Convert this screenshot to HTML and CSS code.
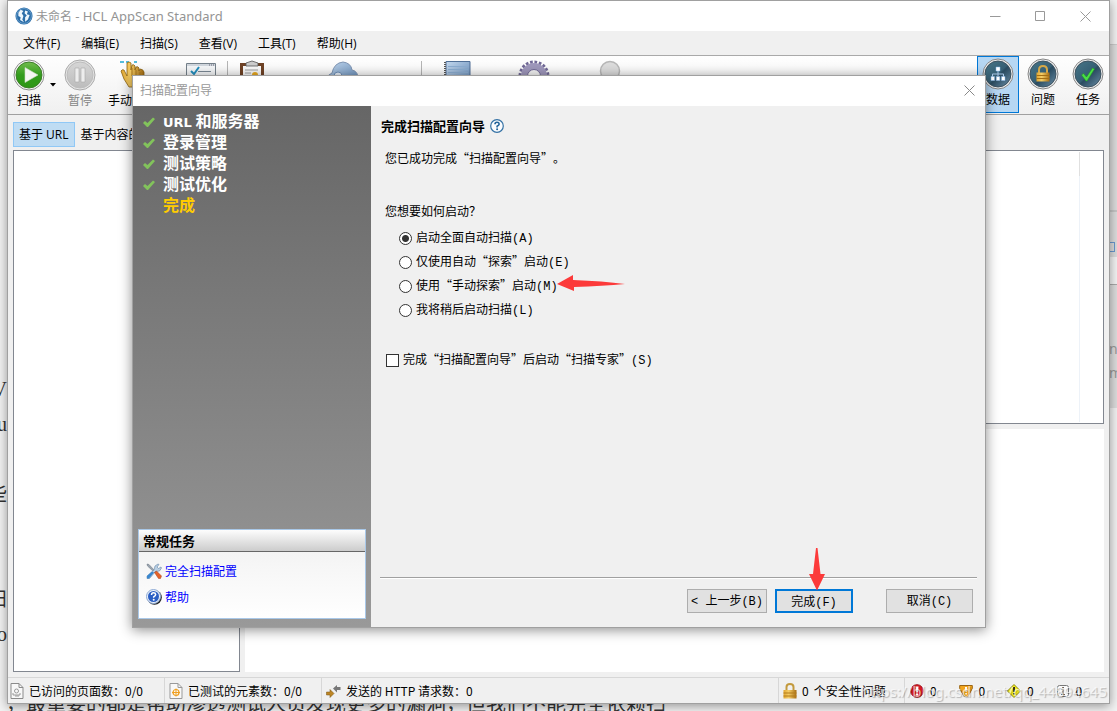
FILE: index.html
```html
<!DOCTYPE html>
<html lang="zh-CN">
<head>
<meta charset="utf-8">
<title>未命名 - HCL AppScan Standard</title>
<link rel="stylesheet" href="styles.css">
</head>
<body>
<div class="backdrop">
  <div class="article">
    <p>V</p><p>u</p><p></p><p>些</p><p>。</p><p></p><p>扫</p><p>o</p><p>，</p>
  </div>
  <p class="last-line">，最重要的都是帮助渗透测试人员发现更多的漏洞，但我们不能完全依赖扫</p>
  <div class="edge">
    <i class="edge-tab"></i><i class="edge-bar"></i><i class="edge-box"></i><i class="edge-strip"></i>
    <span>n</span><span>m</span>
  </div>
</div>

<div class="window">
  <header class="titlebar">
    <svg class="app-icon" width="18" height="18" viewBox="0 0 16 16"><circle cx="8" cy="8" r="7.6" fill="#2b6da8"/><circle cx="8" cy="8" r="6.600" fill="none" stroke="#7fb0d8" stroke-width=".6"/><path d="M3 5l2-2.500 2.500 1L6 5.500 7.500 8 6.500 11 8 13.500 4.500 11.500 5 9 3 8zM9 3l2.500 1L10.500 6.500 13 7l-1.500 4L9 13V9l1.500-1.500L8.500 5.500z" fill="#eef6fc"/></svg>
    <h1>未命名 <span>- HCL AppScan Standard</span></h1>
    <div class="controls">
      <button aria-label="最小化"><svg width="11" height="11"><path d="M0 5.500h10.500" stroke="#999"/></svg></button>
      <button aria-label="最大化"><svg width="11" height="11"><path d="M.5.500h9v9h-9z" fill="none" stroke="#999"/></svg></button>
      <button aria-label="关闭"><svg width="11" height="11"><path d="M.5.500l10 10M10.500.500l-10 10" stroke="#999"/></svg></button>
    </div>
  </header>

  <nav class="menu">
    <button>文件(F)</button><button>编辑(E)</button><button>扫描(S)</button><button>查看(V)</button><button>工具(T)</button><button>帮助(H)</button>
  </nav>

  <div class="toolbar">
    <svg width="0" height="0" class="defs"><defs>
      <linearGradient id="green" x1="0" y1="0" x2="0" y2="1"><stop offset="0" stop-color="#72bd4e"/><stop offset=".5" stop-color="#329c1c"/><stop offset="1" stop-color="#2d9715"/></linearGradient>
      <linearGradient id="grey" x1="0" y1="0" x2="0" y2="1"><stop offset="0" stop-color="#d6d6d6"/><stop offset="1" stop-color="#bcbcbc"/></linearGradient>
      <linearGradient id="teal" x1="0" y1="0" x2="1" y2="1"><stop offset="0" stop-color="#477688"/><stop offset=".5" stop-color="#365f74"/><stop offset=".55" stop-color="#2a4b60"/><stop offset="1" stop-color="#6b8fa8"/></linearGradient>
      <linearGradient id="gold" x1="0" y1="0" x2="1" y2="0"><stop offset="0" stop-color="#e0a631"/><stop offset=".4" stop-color="#f5cd66"/><stop offset="1" stop-color="#a86e13"/></linearGradient>
      <linearGradient id="blue" x1="0" y1="0" x2="1" y2="1"><stop offset="0" stop-color="#c3d8ee"/><stop offset="1" stop-color="#5f87b5"/></linearGradient>
    </defs></svg>
    <button class="tool scan"><svg width="32" height="32" viewBox="0 0 32 32"><circle cx="16" cy="16" r="15" fill="#f7f7f7" stroke="#8c8c8c"/><circle cx="16" cy="16" r="13" fill="url(#green)" stroke="#3c7f28"/><path d="M12 8.500v15L25 16z" fill="#f4f6f2" stroke="#ccdcc6" stroke-width=".6"/></svg><span>扫描</span></button>
    <button class="arrow" aria-label="扫描选项"><svg width="6" height="4"><path d="M0 0h6L3 3.500z"/></svg></button>
    <button class="tool pause" disabled><svg width="32" height="32" viewBox="0 0 32 32"><circle cx="16" cy="16" r="15" fill="#e5e5e5" stroke="#aaa"/><circle cx="16" cy="16" r="13" fill="url(#grey)" stroke="#bdbdbd"/><path d="M11 9h4v14h-4zM17 9h4v14h-4z" fill="#ededed" stroke="#aaa" stroke-width=".6"/></svg><span>暂停</span></button>
    <button class="tool hand"><svg width="32" height="32" viewBox="0 0 32 32"><path d="M4 3h4m2 0h3m5 0h3" stroke="#1fa6d0" stroke-width="1.500"/><path d="M11 4q2-2 4 0v7l1-5q2-1 3 1v4l1-3q2-1 3 1v3l1-2q3 0 4 3v11l-3 4H13l-5-8-3-8q1-2 3-1l3 6z" fill="url(#gold)" stroke="#8a6313" stroke-width=".8"/><path d="M16 9v8m4-6v7m4-5v6" stroke="#a8781c" fill="none"/></svg><span>手动探索</span></button>
    <button class="tool list" aria-label="配置"><svg width="32" height="32" viewBox="0 0 32 32"><path d="M1.500 4.500h29v26h-29z" fill="#f5f7f9" stroke="#74808a"/><path d="M2 6h28" stroke="#c5cdd5" stroke-width="1.500"/><path d="M24 6h5" stroke="#667" stroke-dasharray="1 1"/><path d="M6 12l3 3 5-7" stroke="#238fbf" stroke-width="2" fill="none"/><path d="M13 12.500h13" stroke="#7c8a96"/></svg></button>
    <i class="sep"></i>
    <button class="tool report" aria-label="报告"><svg width="32" height="32" viewBox="0 0 32 32"><rect x="4" y="4" width="24" height="28" fill="#704326"/><path d="M7 7h18v24H7z" fill="#fafafa"/><path d="M10 7V4l3-1q3-2 6 0l3 1v3z" fill="#ccc" stroke="#555" stroke-width=".8"/><path d="M9 11h13M9 14h6" stroke="#a0a0a0"/><circle cx="19" cy="16" r="3" fill="#eaaa22"/></svg></button>
    <button class="tool cloud" aria-label="云"><svg width="32" height="32" viewBox="0 0 32 32"><path d="M1 24q-3-6 5-10Q8 4 17 3q8 1 9 8 7 1 6 12H2z" fill="url(#blue)" stroke="#7e94b3"/><circle cx="12" cy="17" r="4" fill="#e5eef8" stroke="#6e8fb8"/></svg></button>
    <i class="sep far"></i>
    <button class="tool book" aria-label="日志"><svg width="32" height="32" viewBox="0 0 32 32"><path d="M5 2.500h24v28H5z" fill="url(#blue)" stroke="#506f96"/><path d="M7 7.500h20M7 10.500h20M7 13.500h20M7 16.500h20" stroke="#8caed2"/><path d="M4 3v28" stroke="#555" stroke-width="2" stroke-dasharray="1 1"/></svg></button>
    <button class="tool gear" aria-label="工具"><svg width="32" height="32" viewBox="0 0 32 32"><circle cx="16" cy="17" r="14" fill="none" stroke="#716996" stroke-width="3" stroke-dasharray="2.700 1.700"/><circle cx="16" cy="17" r="9.500" fill="none" stroke="#9f98bc" stroke-width="7"/><circle cx="16" cy="17" r="6.500" fill="#f4f4f4" stroke="#716996"/></svg></button>
    <button class="tool lens" aria-label="搜索"><svg width="32" height="32" viewBox="0 0 32 32"><circle cx="16" cy="12" r="9.500" fill="#dcdcdc" stroke="#b7b7b7" stroke-width="1.500"/></svg></button>
    <div class="views">
      <button class="tool view selected"><svg width="32" height="32" viewBox="0 0 32 32"><circle cx="16" cy="16" r="15" fill="#eee" stroke="#858585"/><circle cx="16" cy="16" r="13" fill="url(#teal)" stroke="#3d5260"/><path d="M16 13v5M10.500 19v-3h11v3" fill="none" stroke="#a9c8e8"/><path d="M14 9h4v4h-4zM9 18.500h3.500v4H9zM14.300 18.500h3.500v4h-3.500zM19.500 18.500H23v4h-3.500z" fill="#fff" stroke="#82b5e8" stroke-width=".5"/></svg><span>数据</span></button>
      <button class="tool view"><svg width="32" height="32" viewBox="0 0 32 32"><circle cx="16" cy="16" r="15" fill="#eee" stroke="#858585"/><circle cx="16" cy="16" r="13" fill="url(#teal)" stroke="#3d5260"/><path d="M12 16v-4q0-4 4-4t4 4v4" fill="none" stroke="#d5a847" stroke-width="2"/><path d="M9.500 14.500h13v9h-13z" fill="url(#gold)"/><path d="M9.500 17.500h13m-13 3h13" stroke="#a56f13"/></svg><span>问题</span></button>
      <button class="tool view"><svg width="32" height="32" viewBox="0 0 32 32"><circle cx="16" cy="16" r="15" fill="#eee" stroke="#858585"/><circle cx="16" cy="16" r="13" fill="url(#teal)" stroke="#3d5260"/><path d="M9.500 17l2-1.500 3 3.500 6-9 2 1-7.500 12h-1z" fill="#49df45" stroke="#239528" stroke-width=".6"/></svg><span>任务</span></button>
    </div>
  </div>

  <main class="workspace">
    <section class="left-pane">
      <div class="tabs"><button class="active">基于 URL</button><button>基于内容的</button></div>
      <div class="tree"></div>
    </section>
    <section class="right-pane">
      <div class="results"><i class="column-line"></i></div>
      <div class="details"></div>
    </section>
  </main>

  <footer class="status">
    <div class="cell pages"><svg width="14" height="16" viewBox="0 0 14 16"><path d="M1 .5h8l4 4v11H1z" fill="#f8f8f8" stroke="#8b8b8b"/><path d="M9 .5v4h4" fill="none" stroke="#8b8b8b"/><circle cx="6.500" cy="8" r="2" fill="none" stroke="#999"/><path d="M3 10v2h7v-2M5 13h4" fill="none" stroke="#999"/></svg>已访问的页面数：0/0</div>
    <div class="cell elements"><svg width="14" height="16" viewBox="0 0 14 16"><path d="M1 .5h8l4 4v11H1z" fill="#f8f8f8" stroke="#999"/><path d="M9 .5v4h4" fill="none" stroke="#999"/><circle cx="7" cy="9.500" r="3" fill="none" stroke="#f0a020" stroke-width="1.200"/><path d="M7 5.500v8M3 9.500h8" stroke="#f0a020"/></svg>已测试的元素数：0/0</div>
    <div class="cell requests"><svg width="15" height="14" viewBox="0 0 15 14"><path d="M14.500 3v3H11v2.500L7 4.500 11 1v2z" fill="#777"/><path d="M.5 8v3H4v2.500l4-4L4 5.500V8z" fill="#bd8524" stroke="#775210" stroke-width=".5"/></svg>发送的 HTTP 请求数：0</div>
    <div class="cell issues"><svg width="14" height="16" viewBox="0 0 14 16"><path d="M3.500 8V4q0-3 3.500-3t3.500 3v4" fill="none" stroke="#c39a3e" stroke-width="2"/><path d="M.5 7h13v8.500H.5z" fill="url(#gold)"/><path d="M.5 10h13M.5 13h13" stroke="#b27a1b"/></svg><span>0</span><span>个安全性问题</span></div>
    <div class="cell severities">
      <span><svg width="14" height="14" viewBox="0 0 14 14"><circle cx="7" cy="7" r="6.300" fill="#d71920" stroke="#a01018"/><path d="M5.500 2.500h3L8 8.500H6z" fill="#fff"/><circle cx="7" cy="10.500" r="1.200" fill="#fff"/></svg>0</span>
      <span><svg width="14" height="14" viewBox="0 0 14 14"><path d="M.7 1.500h12.600v3L9 12.500H5l-4.300-8z" fill="#f2a51d" stroke="#9b6514"/><path d="M6 3h2L7.700 8H6.300zM6.200 9h1.600v1.500H6.200z" fill="#fff"/></svg>0</span>
      <span><svg width="14" height="14" viewBox="0 0 14 14"><path d="M7 .5L13.500 7 7 13.500.5 7z" fill="#f5ee20" stroke="#8a860e"/><path d="M6 3h2l-.3 5H6.300zM6.200 9h1.600v1.500H6.200z" fill="#222"/></svg>0</span>
      <span><svg width="14" height="14" viewBox="0 0 14 14"><rect x="1.500" y="1.500" width="11" height="11" rx="2" fill="#fafafa" stroke="#777"/><path d="M5.500 5.500H7v5M5 10.500h4M6 3.500h2" fill="none" stroke="#666"/></svg>0</span>
    </div>
    <span class="watermark">https://blog.csdn.net/qq_44894645</span>
  </footer>
</div>

<div class="dialog" role="dialog" aria-labelledby="dialog-title">
  <header class="dialog-title"><h2 id="dialog-title">扫描配置向导</h2><button aria-label="关闭"><svg width="11" height="11"><path d="M.5.500l10 10M10.500.500l-10 10" stroke="#888"/></svg></button></header>
  <div class="dialog-body">
    <aside class="sidebar">
      <ol class="steps">
        <li><svg width="12" height="11" viewBox="0 0 12 11"><path d="M0 6l2-2 2.500 2L10 .5 12 2 5 10H4z" fill="#82c35b"/></svg><span><b class="latin">URL</b> 和服务器</span></li>
        <li><svg width="12" height="11" viewBox="0 0 12 11"><path d="M0 6l2-2 2.500 2L10 .5 12 2 5 10H4z" fill="#82c35b"/></svg><span>登录管理</span></li>
        <li><svg width="12" height="11" viewBox="0 0 12 11"><path d="M0 6l2-2 2.500 2L10 .5 12 2 5 10H4z" fill="#82c35b"/></svg><span>测试策略</span></li>
        <li><svg width="12" height="11" viewBox="0 0 12 11"><path d="M0 6l2-2 2.500 2L10 .5 12 2 5 10H4z" fill="#82c35b"/></svg><span>测试优化</span></li>
        <li class="current"><i></i><span>完成</span></li>
      </ol>
      <section class="tasks">
        <h3>常规任务</h3>
        <div class="task-links">
          <a href="#config"><svg width="16" height="16" viewBox="0 0 16 16"><path d="M1 1l2 .5L10 9l-1 1L1.500 3z" fill="#9aa5b0" stroke="#66717c" stroke-width=".5"/><path d="M1 13l7-6 1-4 3-2 1 .5-2 2.500 1.500 1.500L15 4l.5 1-2 3-4 .5-6 7H1z" fill="#b9cfe3" stroke="#6587a8" stroke-width=".6"/><path d="M1 13l5-4.500 2 1-5 6H1z" fill="#3987cf"/><path d="M8.500 9.500l2-1.500 5 5-1 2.500h-2z" fill="#e4632a" stroke="#a83f14" stroke-width=".5"/></svg>完全扫描配置</a>
          <a href="#help"><svg width="16" height="16" viewBox="0 0 16 16"><circle cx="8.500" cy="8.500" r="7.300" fill="#222"/><circle cx="7.500" cy="7.500" r="7" fill="#edf2fa" stroke="#8eabd6"/><circle cx="7.500" cy="7.500" r="5.500" fill="#2b5fc4"/><path d="M5.500 6q0-2.200 2-2.200t2.200 1.800q0 1.200-2 2.200v1" fill="none" stroke="#fff" stroke-width="1.500"/><circle cx="7.700" cy="10.800" r="1" fill="#fff"/></svg>帮助</a>
        </div>
      </section>
    </aside>
    <form class="content">
      <h2>完成扫描配置向导 <svg width="14" height="14" viewBox="0 0 14 14"><circle cx="7" cy="7" r="6.300" fill="#fafcfe" stroke="#3572a5" stroke-width="1.200"/><path d="M5 5.300q0-2 2-2t2.200 1.700q0 1-2.100 2.200v1.200" fill="none" stroke="#22649b" stroke-width="1.600"/><circle cx="7.100" cy="10.200" r="1" fill="#22649b"/></svg></h2>
      <p>您已成功完成“扫描配置向导”。</p>
      <fieldset>
        <legend>您想要如何启动？</legend>
        <label><input type="radio" name="start" checked><span>启动全面自动扫描<span class="key">(A)</span></span></label>
        <label><input type="radio" name="start"><span>仅使用自动“探索”启动<span class="key">(E)</span></span></label>
        <label><input type="radio" name="start"><span>使用“手动探索”启动<span class="key">(M)</span></span>
          <svg class="mark-left" width="70" height="18" viewBox="0 0 70 18"><path d="M0 9l16-9v5q30 1 52 4-22 2-51 3v4z" fill="#fc3a3a"/></svg></label>
        <label><input type="radio" name="start"><span>我将稍后启动扫描<span class="key">(L)</span></span></label>
      </fieldset>
      <label class="expert"><input type="checkbox"><span>完成“扫描配置向导”后启动“扫描专家”<span class="key">(S)</span></span></label>
      <footer class="actions">
        <button type="button" class="back"><span class="key">&lt; </span>上一步<span class="key">(B)</span></button>
        <button type="button" class="finish">完成<span class="key">(F)</span><svg class="mark-down" width="18" height="44" viewBox="0 0 18 44"><path d="M8 1h1.500l3 26H17l-8 16.500L1 27h4z" fill="#fc3a3a"/></svg></button>
        <button type="button" class="cancel">取消<span class="key">(C)</span></button>
      </footer>
    </form>
  </div>
</div>
</body>
</html>
```

FILE: styles.css
```css
* { box-sizing: border-box; margin: 0; padding: 0; }
html, body { height: 100%; overflow: hidden; }
body {
  position: relative;
  background: #f0f0f0;
  color: #000;
  font: 12px/16px "Noto Sans CJK SC", sans-serif;
  text-spacing-trim: space-all;
}
button { border: 0; background: none; font: inherit; color: inherit; }
svg { flex: none; display: block; }

/* document behind the windows */
.backdrop { position: absolute; inset: 0; overflow: hidden; background: #f3f3f3; color: #333; font-size: 20px; line-height: 35px; }
.article { position: absolute; bottom: -11px; left: 0; width: 7px; padding-bottom: 35px; overflow: hidden; font-family: "Liberation Serif", "Noto Sans CJK SC", serif; }
.article p { height: 35px; display: flex; justify-content: flex-end; }
.last-line { position: absolute; left: 6px; bottom: -9px; white-space: nowrap; }
.edge { position: absolute; right: 0; top: 44px; width: 8px; height: 364px; background: #dedede; display: flex; flex-direction: column; color: #999; font: 14px/24px "Noto Sans", sans-serif; overflow: hidden; }
.edge-tab { height: 168px; border-top: 1px solid #ccc; border-bottom: 2px solid #c8c8c8; }
.edge-bar { height: 30px; }
.edge-box { height: 10px; width: 6px; border: 1px solid #6a9ad0; }
.edge-strip { height: 28px; margin: 5px 0 52px; background: #f5f5f5; border-bottom: 1px solid #aaa; }

/* main window */
.window {
  position: absolute;
  inset: 0 7px 7px 7px;
  display: flex;
  flex-direction: column;
  background: #f0f0f0;
  border: 1px solid #a0a0a0;
  box-shadow: 0 2px 10px rgba(0,0,0,.4);
}
.titlebar { height: 30px; flex: none; display: flex; align-items: center; padding-left: 7px; background: #fff; color: #949494; }
.titlebar h1 { margin-left: 3px; font: 12px/16px "Noto Sans", "Noto Sans CJK SC", sans-serif; }
.titlebar h1 span { font-size: 13px; }
.controls { display: flex; margin-left: auto; padding-right: 1px; }
.controls button { width: 45px; height: 28px; display: grid; place-items: center; }
.menu { height: 25px; flex: none; display: flex; gap: 21px; padding: 1px 0 0 15px; border-bottom: 1px solid #a9a9a9; font-family: "Open Sans", "Noto Sans CJK SC", sans-serif; }

.toolbar { height: 59px; flex: none; display: flex; background: linear-gradient(#fefefe, #f0f0f0); border-bottom: 1px solid #a0a0a0; }
.defs { position: absolute; }
.tool { flex: none; display: flex; flex-direction: column; align-items: center; padding-top: 3px; white-space: nowrap; }
.tool span { margin-top: 1px; }
.scan { width: 42px; }
.arrow { width: 6px; display: grid; place-items: center; }
.pause { width: 48px; color: #858585; }
.hand { width: 56px; }
.list { width: 82px; }
.sep { width: 1px; height: 44px; margin-top: 5px; background: #b5b5b5; margin-left: -15px; }
.report { width: 48px; }
.cloud { width: 132px; }
.sep.far { margin-left: 13px; }
.book { width: 70px; }
.gear { width: 84px; }
.lens { width: 68px; }
.views { display: flex; gap: 3px; margin-left: auto; }
.view { width: 42px; height: 57px; padding-top: 1px; border: 1px solid transparent; }
.view.selected { background: #b6d7f3; border-color: #0078d7; }

.workspace { flex: 1; min-height: 0; display: flex; gap: 5px; padding: 0 5px 5px 5px; }
.left-pane { width: 227px; flex: none; display: flex; flex-direction: column; }
.tabs { height: 35px; display: flex; align-items: center; padding-top: 4px; overflow: hidden; white-space: nowrap; font-family: "Open Sans", "Noto Sans CJK SC", sans-serif; }
.tabs button { height: 25px; padding: 0 5px; border: 1px solid transparent; }
.tabs .active { background: #bfdcf3; border-color: #90c8f6; }
.tree { flex: 1; background: #fff; border: 1px solid #828790; }
.right-pane { flex: 1; display: flex; flex-direction: column; gap: 5px; padding-top: 35px; }
.results { flex: 273; display: flex; background: #fff; border: 1px solid #828790; }
.column-line { width: 1px; margin: 1px 23px 1px auto; background: linear-gradient(#e0e0e0 24px, #edf2f8 24px); }
.details { flex: 244; background: #fff; }

.status { position: relative; height: 26px; flex: none; display: flex; border-top: 1px solid #d7d7d7; }
.cell { display: flex; align-items: center; gap: 5px; padding: 0 5px 0 4px; border-left: 1px solid #d7d7d7; white-space: nowrap; }
.pages { width: 156px; border-left: 0; padding-left: 2px; }
.elements { width: 157px; }
.requests { flex: 1; }
.issues { width: 126px; }
.severities { width: 205px; gap: 0; padding-left: 5px; }
.severities span { width: 50px; display: flex; align-items: center; gap: 6px; }
.watermark { position: absolute; right: 2px; bottom: 2px; color: rgba(255,255,255,.65); font: 15px/20px "Noto Sans", sans-serif; text-shadow: 1px 1px 1px rgba(0,0,0,.25); white-space: nowrap; }

/* wizard */
.dialog {
  position: absolute;
  inset: 75px 131px 83px 132px;
  display: flex;
  flex-direction: column;
  background: #f0f0f0;
  border: 1px solid #a0a0a0;
  box-shadow: 0 2px 12px rgba(0,0,0,.45);
}
.dialog-title { height: 30px; flex: none; display: flex; align-items: center; justify-content: space-between; padding: 0 0 2px 7px; background: #fff; color: #999; }
.dialog-title h2 { font-size: 12px; font-weight: 400; }
.dialog-title button { width: 31px; height: 28px; display: grid; place-items: center; }
.dialog-body { flex: 1; min-height: 0; display: flex; }
.sidebar { width: 238px; flex: none; display: flex; flex-direction: column; justify-content: space-between; padding: 4px 5px 8px; background: linear-gradient(#666, #999); }
.steps { list-style: none; padding-left: 5px; color: #fff; font-size: 16px; font-weight: 700; line-height: 21px; }
.steps li { display: flex; align-items: center; gap: 8px; }
.steps svg { margin-top: 3px; }
.steps i { width: 12px; }
.latin { font: 700 13px/16px "DejaVu Sans", sans-serif; }
.current { color: #fc0; }
.tasks { background: linear-gradient(#f0f0f0, #fff); border: 1px solid #a9c8e8; }
.tasks h3 { height: 22px; padding-left: 4px; font-size: 13px; line-height: 21px; background: linear-gradient(#fdfdfd, #ccc); border-bottom: 1px solid #666; }
.task-links { display: flex; flex-direction: column; gap: 10px; padding: 11px 7px 13px; }
.task-links a { display: flex; align-items: center; gap: 3px; color: #00f; text-decoration: none; }

.content { flex: 1; min-width: 0; display: flex; flex-direction: column; padding: 10px 8px 14px 9px; line-height: 20px; }
.content h2 { display: flex; align-items: center; gap: 5px; padding-left: 1px; font-size: 13px; line-height: 20px; }
.content p { margin: 12px 0 33px 5px; }
fieldset { border: 0; padding-left: 5px; }
legend { height: 25px; }
label { position: relative; display: flex; align-items: center; gap: 4px; height: 24px; }
fieldset label { margin-left: 14px; }
.expert { margin: 26px 0 0 6px; }
input { appearance: none; width: 13px; height: 13px; background: #fff; border: 1px solid #333; }
input[type="radio"] { border-radius: 50%; }
input[type="radio"]:checked { background: radial-gradient(circle, #333 0 3px, #fff 4px); }
.key { font-family: "Liberation Mono", monospace; }
.mark-left { position: absolute; left: 158px; top: 1px; }
.actions { display: flex; margin-top: auto; padding: 11px 4px 0 0; justify-content: flex-end; border-top: 1px solid #a0a0a0; box-shadow: inset 0 1px #fff; }
.actions button { height: 24px; background: #e1e1e1; border: 1px solid #adadad; white-space: nowrap; }
.back { width: 80px; margin-right: 8px; }
.actions .finish { position: relative; width: 78px; margin-right: 33px; border: 2px solid #0078d7; }
.cancel { width: 87px; }
.mark-down { position: absolute; left: 31px; bottom: 20px; }
```
